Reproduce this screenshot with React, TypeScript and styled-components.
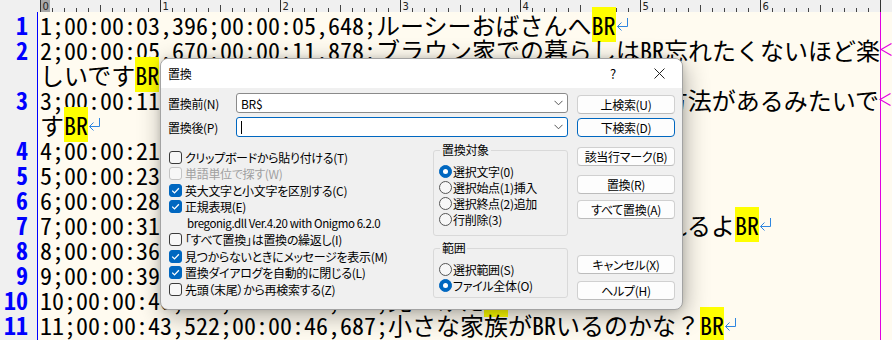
import styled, { createGlobalStyle } from 'styled-components'

const GlobalStyle = createGlobalStyle`
  html, body {
    margin: 0;
    padding: 0;
  }
  body {
    background: #fffbf0;
    font-family: "Noto Sans CJK JP", "Noto Sans", sans-serif;
  }
`

const EDITOR_FONT = `"Noto Sans CJK JP", "Noto Sans", sans-serif`

type Line = {
  num?: number
  text: string
  br?: boolean
  end: 'ret' | 'wrap'
}

const lines: Line[] = [
  { num: 1, text: '1;00:00:03,396;00:00:05,648;ルーシーおばさんへ', br: true, end: 'ret' },
  { num: 2, text: '2;00:00:05,670;00:00:11,878;ブラウン家での暮らしはBR忘れたくないほど楽', end: 'wrap' },
  { text: 'しいです', br: true, end: 'ret' },
  { num: 3, text: '3;00:00:11,962;00:00:15,340;ペルーに帰らずにすむいい方法があるみたいで', end: 'wrap' },
  { text: 'す', br: true, end: 'ret' },
  { num: 4, text: '4;00:00:21,180;00:00:23,520;本当にそう思うの？', br: true, end: 'ret' },
  { num: 5, text: '5;00:00:23,610;00:00:27,900;ええ きっと大丈夫', br: true, end: 'ret' },
  { num: 6, text: '6;00:00:28,030;00:00:31,120;ここが私たちの家よ', br: true, end: 'ret' },
  { num: 7, text: '7;00:00:31,250;00:00:35,880;大丈夫さ、きっとうまくやれるよ', br: true, end: 'ret' },
  { num: 8, text: '8;00:00:36,010;00:00:39,240;ありがとう', br: true, end: 'ret' },
  { num: 9, text: '9;00:00:39,400;00:00:42,980;また会いましょう', br: true, end: 'ret' },
  { num: 10, text: '10;00:00:40,100;00:00:43,400;見つけた', br: true, end: 'ret' },
  { num: 11, text: '11;00:00:43,522;00:00:46,687;小さな家族がBRいるのかな？', br: true, end: 'ret' },
]

const Page = styled.div`
  position: relative;
  width: 892px;
  height: 340px;
  overflow: hidden;
  display: flex;
  flex-direction: column;
  background: #fffbf0;
`

const RulerBar = styled.svg`
  display: block;
  flex: none;
  background: #f0f0f0;
`

const EditorBody = styled.div`
  flex: 1;
  display: flex;
  min-height: 0;
`

const Gutter = styled.div`
  width: 37px;
  flex: none;
  background: #f0f0f0;
  border-right: 1px solid #0000ff;
`

const LineNo = styled.div`
  height: 25px;
  line-height: 25px;
  padding-right: 9px;
  text-align: right;
  font-family: ${EDITOR_FONT};
  font-feature-settings: "hwid" 1;
  font-size: 24px;
  font-weight: 700;
  color: #0000ff;
`

const TextArea = styled.div`
  width: 840px;
  flex: none;
  padding-left: 2px;
  border-right: 1px solid #e000e0;
`

const TextRow = styled.div`
  height: 25px;
  line-height: 25px;
  white-space: pre;
  font-family: ${EDITOR_FONT};
  font-size: 24px;
  color: #000;
`

const Half = styled.span`
  font-feature-settings: "hwid" 1;
`

const Hit = styled.span`
  font-feature-settings: "hwid" 1;
  background: #ffff00;
`

const Mark = styled.svg`
  display: inline-block;
  vertical-align: top;
  width: 12px;
  height: 25px;
`

const renderRuns = (s: string) =>
  s
    .split(/([\x20-\x7e]+)/)
    .filter(Boolean)
    .map((part, i) =>
      /^[\x20-\x7e]+$/.test(part) ? <Half key={i}>{part}</Half> : <span key={i}>{part}</span>
    )

const ReturnMark = () => (
  <Mark viewBox="0 0 12 25">
    <path d="M11.5 6 V14.5 H1.5 M5.5 10.5 L1.5 14.5 L5.5 18.5" fill="none" stroke="#2f86e0" strokeWidth="1" />
  </Mark>
)

const WrapMark = () => (
  <Mark viewBox="0 0 12 25">
    <path d="M11.5 6.5 L1 12.5 L11.5 18.5" fill="none" stroke="#e000e0" strokeWidth="1.2" />
  </Mark>
)

const Ruler = () => {
  const ticks = []
  for (let c = 0; c <= 70; c++) {
    const x = 40.5 + c * 12
    if (c % 10 === 0) {
      ticks.push(<line key={`l${c}`} x1={x} y1={0} x2={x} y2={12} stroke="#333" />)
      if (c < 70) {
        ticks.push(
          <text key={`t${c}`} x={x + 2} y={10} fontSize="10" fontFamily="DejaVu Sans, sans-serif" fill="#222">
            {c / 10}
          </text>
        )
      }
    } else {
      ticks.push(<line key={`l${c}`} x1={x} y1={c % 5 === 0 ? 5 : 8} x2={x} y2={12} stroke="#444" />)
    }
  }
  return (
    <RulerBar width="892" height="12" viewBox="0 0 892 12">
      <rect x="40" y="0" width="10" height="12" fill="#a8a8a8" />
      {ticks}
    </RulerBar>
  )
}

/* ---------- dialog ---------- */

const Dialog = styled.div`
  position: absolute;
  left: 160px;
  top: 58px;
  width: 523px;
  height: 252px;
  box-sizing: border-box;
  display: flex;
  flex-direction: column;
  background: #f0f0f0;
  border: 1px solid #a3a3a3;
  border-radius: 8px;
  overflow: hidden;
  box-shadow: 2px 6px 24px rgba(0, 0, 0, 0.32), 0 0 6px rgba(0, 0, 0, 0.12);
  font-family: "Noto Sans CJK JP", "Noto Sans", sans-serif;
  font-feature-settings: "palt" 1;
  font-size: 12px;
  letter-spacing: -0.3px;
  color: #000;
`

const TitleBar = styled.div`
  height: 29px;
  flex: none;
  display: flex;
  align-items: center;
  padding-left: 7px;
  background: #ffffff;
`

const Title = styled.span`
  flex: 1;
`

const TitleButton = styled.div`
  width: 46px;
  height: 29px;
  display: flex;
  align-items: center;
  justify-content: center;
  font-size: 13px;
`

const Body = styled.div`
  flex: 1;
  display: grid;
  grid-template-columns: 400px 98px;
  column-gap: 9px;
  align-items: start;
  padding: 5px 7px 0 7px;
`

const LeftPane = styled.div`
  display: flex;
  flex-direction: column;
`

const FieldRow = styled.div<{ $gap?: number }>`
  display: flex;
  align-items: center;
  height: 20px;
  margin-top: ${(p) => p.$gap ?? 0}px;
`

const FieldLabel = styled.span`
  width: 68px;
  flex: none;
`

const Combo = styled.div<{ $focused?: boolean }>`
  flex: 1;
  height: 20px;
  box-sizing: border-box;
  display: flex;
  align-items: center;
  padding: 0 4px;
  background: #ffffff;
  border: 1px solid ${(p) => (p.$focused ? '#0067c0' : '#8a8a8a')};
  border-radius: 3px;
`

const ComboValue = styled.span`
  flex: 1;
  display: flex;
  align-items: center;
`

const Caret = styled.span`
  display: inline-block;
  width: 1px;
  height: 13px;
  background: #000;
`

const Options = styled.div`
  display: grid;
  grid-template-columns: 265px 135px;
  margin-top: 5px;
`

const CheckList = styled.div`
  display: flex;
  flex-direction: column;
  padding-top: 7px;
`

const CheckRow = styled.div<{ $disabled?: boolean }>`
  display: flex;
  align-items: center;
  height: 16.5px;
  padding-left: 1px;
  white-space: nowrap;
  color: ${(p) => (p.$disabled ? '#a0a0a0' : '#000')};
`

const Note = styled.div`
  height: 16.5px;
  line-height: 16.5px;
  padding-left: 19px;
  white-space: nowrap;
  font-size: 11.5px;
  letter-spacing: -0.4px;
`

const Box = styled.span<{ $checked?: boolean; $disabled?: boolean }>`
  width: 13px;
  height: 13px;
  box-sizing: border-box;
  flex: none;
  margin-right: 3px;
  border-radius: 3px;
  display: flex;
  align-items: center;
  justify-content: center;
  background: ${(p) => (p.$checked ? '#0067c0' : '#f7f7f7')};
  border: 1px solid ${(p) => (p.$checked ? '#0067c0' : p.$disabled ? '#c4c4c4' : '#3a3a3a')};
`

const Groups = styled.div`
  display: flex;
  flex-direction: column;
  gap: 4px;
`

const Group = styled.fieldset<{ $height: number }>`
  margin: 0;
  padding: 5px 0 0 5px;
  height: ${(p) => p.$height}px;
  box-sizing: border-box;
  min-width: 0;
  border: 1px solid #d9d9d9;
  border-radius: 3px;
`

const GroupTitle = styled.legend`
  margin-left: 1px;
  padding: 0 2px;
  line-height: 16px;
`

const RadioRow = styled.div`
  display: flex;
  align-items: center;
  height: 16px;
  white-space: nowrap;
`

const Dot = styled.span<{ $on?: boolean }>`
  width: 13px;
  height: 13px;
  box-sizing: border-box;
  flex: none;
  margin-right: 1px;
  border-radius: 50%;
  background: ${(p) => (p.$on ? '#0067c0' : '#f7f7f7')};
  border: 1px solid ${(p) => (p.$on ? '#0067c0' : '#555')};
  display: flex;
  align-items: center;
  justify-content: center;

  &::after {
    content: '';
    display: ${(p) => (p.$on ? 'block' : 'none')};
    width: 5px;
    height: 5px;
    border-radius: 50%;
    background: #ffffff;
  }
`

const ButtonColumn = styled.div`
  display: flex;
  flex-direction: column;
`

const Button = styled.div<{ $top: number; $default?: boolean }>`
  height: 19px;
  margin-top: ${(p) => p.$top}px;
  box-sizing: border-box;
  display: flex;
  align-items: center;
  justify-content: center;
  background: #fdfdfd;
  border: 1px solid ${(p) => (p.$default ? '#0067c0' : '#d0d0d0')};
  border-bottom-color: ${(p) => (p.$default ? '#0067c0' : '#bcbcbc')};
  border-radius: 4px;
  white-space: nowrap;
`

const Chevron = () => (
  <svg width="9" height="6" viewBox="0 0 9 6">
    <path d="M0.5 0.8 L4.5 4.8 L8.5 0.8" fill="none" stroke="#555" strokeWidth="1" />
  </svg>
)

const Tick = () => (
  <svg width="11" height="11" viewBox="0 0 11 11">
    <path d="M2.2 5.6 L4.5 7.9 L8.9 3.3" fill="none" stroke="#fff" strokeWidth="1.3" />
  </svg>
)

const checks = [
  { label: 'クリップボードから貼り付ける(T)' },
  { label: '単語単位で探す(W)', disabled: true },
  { label: '英大文字と小文字を区別する(C)', checked: true },
  { label: '正規表現(E)', checked: true },
  { note: 'bregonig.dll Ver.4.20 with Onigmo 6.2.0' },
  { label: '「すべて置換」は置換の繰返し(I)' },
  { label: '見つからないときにメッセージを表示(M)', checked: true },
  { label: '置換ダイアログを自動的に閉じる(L)', checked: true },
  { label: '先頭（末尾）から再検索する(Z)' },
]

const buttons = [
  { label: '上検索(U)', top: 2 },
  { label: '下検索(D)', top: 4, def: true },
  { label: '該当行マーク(B)', top: 10 },
  { label: '置換(R)', top: 9 },
  { label: 'すべて置換(A)', top: 6 },
  { label: 'キャンセル(X)', top: 36 },
  { label: 'ヘルプ(H)', top: 7 },
]

const ReplaceDialog = () => (
  <Dialog>
    <TitleBar>
      <Title>置換</Title>
      <TitleButton>?</TitleButton>
      <TitleButton>
        <svg width="11" height="11" viewBox="0 0 11 11">
          <path d="M0.5 0.5 L10.5 10.5 M10.5 0.5 L0.5 10.5" stroke="#222" strokeWidth="1" />
        </svg>
      </TitleButton>
    </TitleBar>
    <Body>
      <LeftPane>
        <FieldRow>
          <FieldLabel>置換前(N)</FieldLabel>
          <Combo>
            <ComboValue>BR$</ComboValue>
            <Chevron />
          </Combo>
        </FieldRow>
        <FieldRow $gap={4}>
          <FieldLabel>置換後(P)</FieldLabel>
          <Combo $focused>
            <ComboValue>
              <Caret />
            </ComboValue>
            <Chevron />
          </Combo>
        </FieldRow>
        <Options>
          <CheckList>
            {checks.map((c, i) =>
              c.note ? (
                <Note key={i}>{c.note}</Note>
              ) : (
                <CheckRow key={i} $disabled={c.disabled}>
                  <Box $checked={c.checked} $disabled={c.disabled}>
                    {c.checked && <Tick />}
                  </Box>
                  {c.label}
                </CheckRow>
              )
            )}
          </CheckList>
          <Groups>
            <Group $height={94}>
              <GroupTitle>置換対象</GroupTitle>
              <RadioRow>
                <Dot $on />
                選択文字(0)
              </RadioRow>
              <RadioRow>
                <Dot />
                選択始点(1)挿入
              </RadioRow>
              <RadioRow>
                <Dot />
                選択終点(2)追加
              </RadioRow>
              <RadioRow>
                <Dot />
                行削除(3)
              </RadioRow>
            </Group>
            <Group $height={58}>
              <GroupTitle>範囲</GroupTitle>
              <RadioRow>
                <Dot />
                選択範囲(S)
              </RadioRow>
              <RadioRow>
                <Dot $on />
                ファイル全体(O)
              </RadioRow>
            </Group>
          </Groups>
        </Options>
      </LeftPane>
      <ButtonColumn>
        {buttons.map((b) => (
          <Button key={b.label} $top={b.top} $default={b.def}>
            {b.label}
          </Button>
        ))}
      </ButtonColumn>
    </Body>
  </Dialog>
)

export default function App() {
  return (
    <>
      <GlobalStyle />
      <Page>
        <Ruler />
        <EditorBody>
          <Gutter>
            {lines.map((l, i) => (
              <LineNo key={i}>{l.num ?? ''}</LineNo>
            ))}
          </Gutter>
          <TextArea>
            {lines.map((l, i) => (
              <TextRow key={i}>
                {renderRuns(l.text)}
                {l.br && <Hit>BR</Hit>}
                {l.end === 'ret' ? <ReturnMark /> : <WrapMark />}
              </TextRow>
            ))}
          </TextArea>
        </EditorBody>
        <ReplaceDialog />
      </Page>
    </>
  )
}
